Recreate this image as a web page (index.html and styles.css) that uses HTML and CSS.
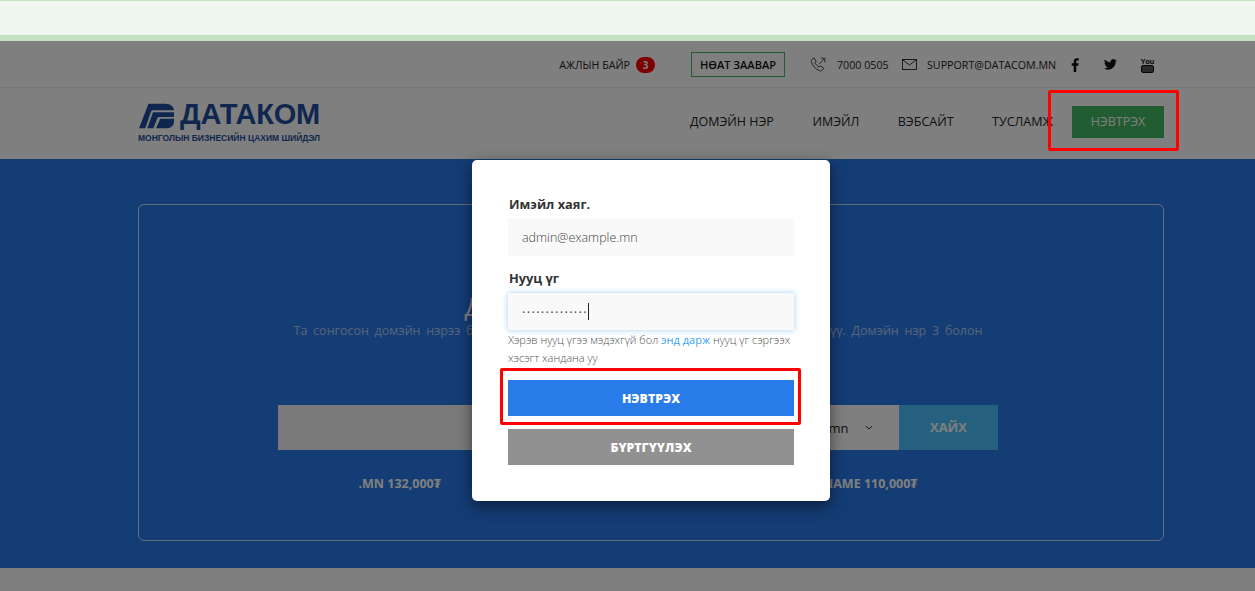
FILE: index.html
```html
<!DOCTYPE html>
<html lang="mn">
<head>
<meta charset="utf-8">
<title>Датаком</title>
<link rel="stylesheet" href="styles.css">
</head>
<body>
<div class="alert"></div>
<div class="page">
  <div class="topbar">
    <div class="wrap topbar-row">
      <a class="job">АЖЛЫН БАЙР <span class="badge">3</span></a>
      <a class="guide">НӨАТ ЗААВАР</a>
      <svg class="ico-phone" viewBox="0 0 16 16" width="16" height="16" fill="none" stroke="#222" stroke-width=".8"><path d="M2.2 2.1 4.2 1l2 3.4-1.3 1c.6 2 2.300 3.800 4.300 4.700l1.200-1.200 3.200 2.200-1.200 2.100c-.6.7-1.700.9-2.700.5C5.500 12.300 2.500 8.700 1.300 4.700 1 3.600 1.400 2.700 2.200 2.100Z"/><path d="M9 7.200 14.700 1.300M10.700 1.200h4.100v4.100"/></svg>
      <span class="phone">7000 0505</span>
      <svg class="ico-mail" viewBox="0 0 15 11" width="15" height="11" fill="none" stroke="#222" stroke-width=".9"><rect x=".5" y=".5" width="14" height="10"/><path d="M.7.8 7.500 6l6.800-5.200"/></svg>
      <span class="mail">SUPPORT@DATACOM.MN</span>
      <svg class="soc-f" viewBox="0 0 9 15" width="9" height="14" fill="#111"><path d="M2.600 15V8.300H.4V5.700h2.200V3.800C2.600 1.500 4 .3 6 .3c.9 0 1.800.1 2 .1v2.300H6.600c-1 0-1.300.5-1.300 1.300v1.700h2.600l-.4 2.600H5.300V15H2.600Z"/></svg>
      <svg class="soc-t" viewBox="0 0 24 20" width="13" height="11" fill="#111"><path d="M24 2.400c-.9.4-1.800.7-2.800.8 1-.6 1.800-1.600 2.200-2.700-1 .6-2 1-3.100 1.200A4.900 4.900 0 0 0 11.900 6.100C7.800 5.900 4.200 3.900 1.700.9a4.900 4.900 0 0 0 1.500 6.600c-.8 0-1.600-.2-2.200-.6v.1c0 2.400 1.700 4.400 3.900 4.800-.7.200-1.500.2-2.200.1.600 2 2.400 3.400 4.600 3.400A9.900 9.900 0 0 1 0 17.300 13.900 13.900 0 0 0 7.500 19.500c9.100 0 14-7.500 14-14v-.6c1-.7 1.800-1.500 2.500-2.500Z"/></svg>
      <span class="soc-y"><span class="you">You</span><span class="tube"></span></span>
    </div>
  </div>
  <header class="nav">
    <div class="wrap nav-row">
      <div class="logo">
        <div class="logo-top">
          <svg class="logo-mark" viewBox="0 0 37 26" width="37" height="26"><path fill="#1f4f9c" d="M10 0H28C33 0 37 3 37 7H15.200C13.800 7 13 7.700 12.500 9L6.600 26H0Z"/><path fill="#1f4f9c" d="M14.800 9H37V14H21.600C20.400 14 19.800 14.500 19.400 15.500L15.200 26H8.800Z"/><path fill="#1f4f9c" d="M22.500 16H37V20C36.500 23.500 33.500 26 30 26H18Z"/></svg>
          <span class="logo-name">ДАТАКОМ</span>
        </div>
        <div class="logo-tag">МОНГОЛЫН БИЗНЕСИЙН ЦАХИМ ШИЙДЭЛ</div>
      </div>
      <nav class="menu">
        <a>ДОМЭЙН НЭР</a>
        <a>ИМЭЙЛ</a>
        <a>ВЭБСАЙТ</a>
        <a>ТУСЛАМЖ</a>
        <a class="login">НЭВТРЭХ</a>
      </nav>
    </div>
  </header>
  <section class="hero">
    <div class="card">
      <h1 class="hero-title">Домэйн нэрээ шалгаж авна</h1>
      <p class="hero-sub">Та сонгосон домэйн нэрээ бүртгэлтэй эсэхийг шалгахын тулд талбарт бичиж хайнэ үү. Домэйн нэр 3 болон</p>
      <div class="search">
        <div class="search-input"></div>
        <div class="search-select"><span>.mn</span><svg viewBox="0 0 10 6" width="8" height="5" fill="none" stroke="#222" stroke-width="1.200"><path d="M1 1l4 4 4-4"/></svg></div>
        <div class="search-btn">ХАЙХ</div>
      </div>
      <div class="prices">
        <span>.MN 132,000₮</span>
        <span>.NAME 110,000₮</span>
      </div>
    </div>
  </section>
  <div class="below"></div>
</div>
<div class="backdrop"></div>
<div class="modal">
  <label class="field-label">Имэйл хаяг.</label>
  <div class="input email">admin@example.mn</div>
  <label class="field-label second">Нууц үг</label>
  <div class="input focus"><span class="dots">··············</span><span class="caret"></span></div>
  <p class="help">Хэрэв нууц үгээ мэдэхгүй бол <a>энд дарж</a> нууц үг сэргээх хэсэгт хандана уу</p>
  <button class="btn primary">НЭВТРЭХ</button>
  <button class="btn secondary">БҮРТГҮҮЛЭХ</button>
</div>
<div class="mark mark-nav"></div>
<div class="mark mark-btn"></div>
</body>
</html>
```
FILE: styles.css
```css
* { box-sizing: border-box; }
html, body { margin: 0; height: 591px; overflow: hidden; }
body { font-family: "Open Sans", "Noto Sans", sans-serif; color: #222; background: #fff; position: relative; }
a { color: inherit; text-decoration: none; }

.alert { height: 41px; background: #f0f7f0; border-top: 1px solid #c6e0c4; border-bottom: 6px solid #c6e0c4; }

.wrap { width: 1026px; margin-left: 138px; }

.topbar { height: 47px; border-bottom: 1px solid #f0f0f0; }
.topbar-row { height: 46px; padding-top: 1px; display: flex; align-items: center; justify-content: flex-end; font-size: 10.700px; line-height: 16px; color: #222; }
.job { display: flex; align-items: center; gap: 6px; }
.badge { width: 19px; height: 16px; border-radius: 8px; background: #f00; color: #fff; font-size: 10px; font-weight: 700; text-align: center; line-height: 16px; }
.guide { margin-left: 36px; width: 94px; height: 25px; border: 1px solid #45b866; font-size: 11px; font-weight: 600; line-height: 23px; text-align: center; color: #111; }
.ico-phone { margin-left: 25px; }
.phone { margin-left: 11px; width: 52px; white-space: nowrap; }
.ico-mail { margin-left: 13px; }
.mail { margin-left: 10px; white-space: nowrap; width: 131px; }
.soc-f { margin-left: 13px; }
.soc-t { margin-left: 24px; }
.soc-y { margin-left: 24px; margin-right: 10px; width: 13px; display: flex; flex-direction: column; align-items: center; }
.you { font-size: 7.500px; line-height: 8px; font-weight: 700; color: #111; letter-spacing: -.3px; }
.tube { width: 13px; height: 8px; border: 1.500px solid #111; border-radius: 2px; background: #555; }

.nav { height: 71px; }
.nav-row { height: 71px; padding-bottom: 4px; display: flex; align-items: center; justify-content: space-between; }
.logo { width: 182px; padding-top: 2px; }
.logo-top { display: flex; align-items: center; gap: 6px; height: 28px; }
.logo-mark { margin-left: 1px; }
.logo-name { margin-top: -3px; font-family: "Liberation Sans", Arial, sans-serif; font-weight: 700; font-size: 29px; line-height: 28px; color: #1f4f9c; letter-spacing: -.2px; white-space: nowrap; }
.logo-tag { margin-top: 3px; font-family: "Liberation Sans", Arial, sans-serif; font-weight: 700; font-size: 8.500px; line-height: 11px; color: #1f4f9c; white-space: nowrap; }
.menu { display: flex; align-items: center; font-size: 12.500px; color: #222; }
.menu a { margin-left: 38.500px; white-space: nowrap; }
.menu a.login { margin-left: 19px; width: 92px; height: 32px; line-height: 32px; text-align: center; background: #45b866; color: #fff; }

.hero { height: 409px; background: #2979ea; padding: 45px 91px 27px 138px; }
.card { height: 337px; border: 1px solid rgba(255,255,255,.75); border-radius: 6px; display: flex; flex-direction: column; align-items: center; padding: 86px 165px 0 139px; color: #fff; }
.hero-title { margin: 0; font-size: 26px; line-height: 30px; font-weight: 400; white-space: nowrap; }
.hero-sub { margin: 1px 0 0; font-size: 12.500px; line-height: 18px; opacity: .6; white-space: nowrap; word-spacing: 2.500px; }
.search { display: flex; width: 720px; height: 45px; margin-top: 65px; flex: none; }
.search-input { flex: 1; background: #f4f4f4; }
.search-select { width: 100px; background: #fff; color: #222; font-size: 13px; display: flex; align-items: center; gap: 17px; padding-left: 26px; }
.search-btn { width: 99px; background: #4ac0fe; color: #fff; font-weight: 700; font-size: 13px; line-height: 45px; text-align: center; }
.prices { width: 559px; margin-top: 25px; display: flex; justify-content: space-between; font-size: 12.500px; font-weight: 700; line-height: 18px; }

.below { height: 23px; }

.backdrop { position: absolute; inset: 41px 0 0 0; background: rgba(0,0,0,.5); }

.modal { position: absolute; left: 472px; top: 160px; width: 358px; height: 341px; background: #fff; border-radius: 5px; padding: 36px; box-shadow: 0 5px 15px rgba(0,0,0,.5); }
.field-label { display: block; margin-left: 1px; font-size: 12.800px; font-weight: 700; line-height: 16px; color: #333; }
.field-label.second { margin-top: 14px; }
.input { height: 38px; margin-top: 6px; padding: 0 14px; background: #f9f9f9; font-size: 12.500px; font-weight: 300; line-height: 38px; color: #444; display: flex; align-items: center; }
.input.email { padding-top: 2px; }
.input.focus { height: 37px; margin-top: 7px; box-shadow: 0 0 6px rgba(102,175,233,.6); }
.dots { letter-spacing: 1.300px; font-weight: 400; font-size: 13px; }
.caret { width: 1px; height: 17px; background: #222; }
.help { margin: 1px 0 0; font-size: 11.050px; line-height: 18px; font-weight: 300; color: #555; height: 38px; }
.help a { color: #3aa6f5; font-weight: 400; }
.btn { display: block; width: 286px; height: 36px; border: 0; font-family: inherit; font-size: 12.300px; font-weight: 800; color: #fff; padding: 0; }
.primary { margin-top: 11px; background: #2a7bea; }
.secondary { margin-top: 13px; background: #919191; }

.mark { position: absolute; border: 3px solid #f00; border-radius: 2px; }
.mark-nav { left: 1048px; top: 90px; width: 131px; height: 61px; }
.mark-btn { left: 500px; top: 368px; width: 301px; height: 57px; }
```
